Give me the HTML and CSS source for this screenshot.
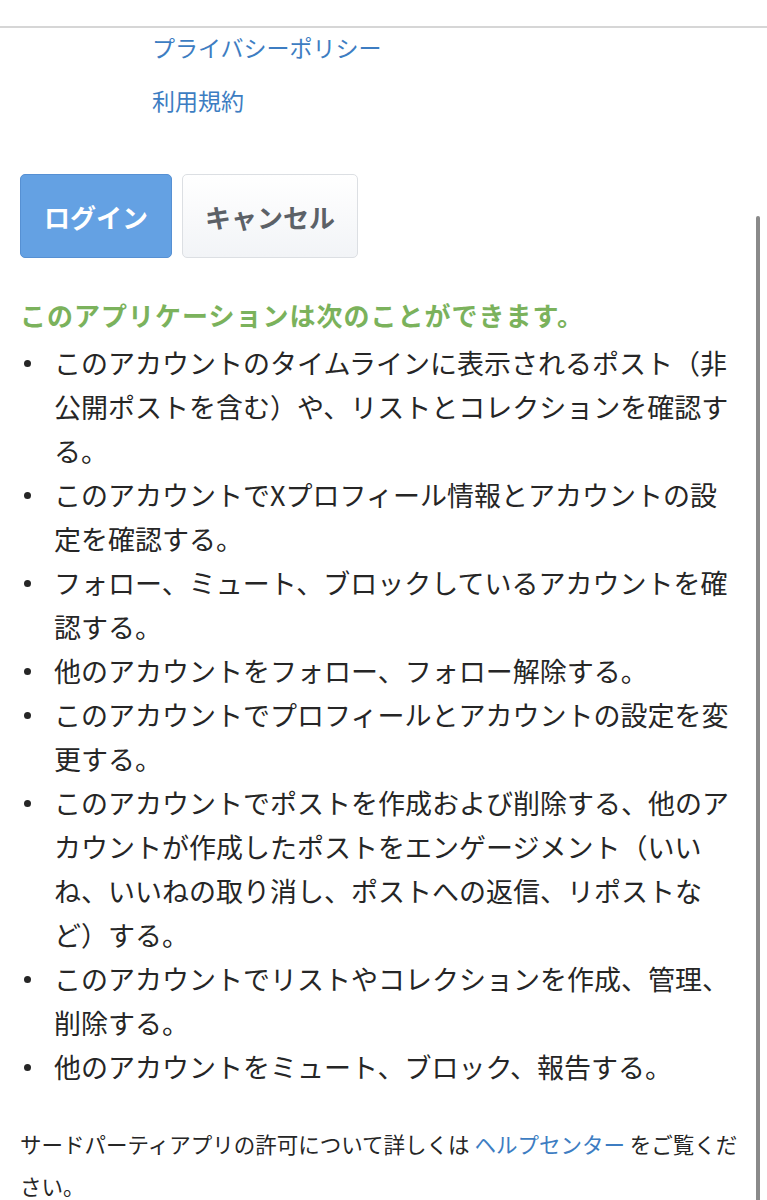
FILE: index.html
```html
<!DOCTYPE html>
<html lang="ja">
<head>
  <meta charset="UTF-8">
  <title>アプリ連携</title>
  <link rel="stylesheet" href="styles.css">
</head>
<body>
  <div class="topbar"></div>

  <ul class="links">
    <li><a href="#" class="link">プライバシーポリシー</a></li>
    <li><a href="#" class="link">利用規約</a></li>
  </ul>

  <div class="content">
    <div class="actions">
      <button class="btn primary">ログイン</button>
      <button class="btn">キャンセル</button>
    </div>

    <h2 class="perm-title">このアプリケーションは次のことができます。</h2>
    <ul class="perms">
      <li>このアカウントのタイムラインに表示されるポスト（非公開ポストを含む）や、リストとコレクションを確認する。</li>
      <li>このアカウントでXプロフィール情報とアカウントの設定を確認する。</li>
      <li>フォロー、ミュート、ブロックしているアカウントを確認する。</li>
      <li>他のアカウントをフォロー、フォロー解除する。</li>
      <li>このアカウントでプロフィールとアカウントの設定を変更する。</li>
      <li>このアカウントでポストを作成および削除する、他のアカウントが作成したポストをエンゲージメント（いいね、いいねの取り消し、ポストへの返信、リポストなど）する。</li>
      <li>このアカウントでリストやコレクションを作成、管理、削除する。</li>
      <li>他のアカウントをミュート、ブロック、報告する。</li>
    </ul>

    <p class="note">サードパーティアプリの許可について詳しくは <a href="#" class="link">ヘルプセンター</a> をご覧ください。</p>
  </div>

  <div class="scroll-thumb"></div>
</body>
</html>
```

FILE: styles.css
```css
html {
  overflow: hidden;
}

body {
  margin: 0;
  height: 1200px;
  overflow: hidden;
  position: relative;
  background: #fff;
  color: #262626;
  font-family: "Noto Sans CJK JP", "Noto Sans", sans-serif;
}

.topbar {
  height: 26px;
  border-bottom: 2px solid #d6d6d6;
}

.links {
  list-style: none;
  margin: 0;
  padding: 0 0 0 152px;
}

.links li {
  font-size: 23px;
  line-height: 38px;
  margin-bottom: 15px;
}

.link {
  color: #3d7dc2;
  text-decoration: none;
}

.content {
  padding: 0 27px 0 20px;
}

.actions {
  display: flex;
  gap: 10px;
  margin-top: 55px;
}

.btn {
  height: 84px;
  padding: 0 22px;
  font-family: inherit;
  font-size: 26px;
  font-weight: bold;
  color: #5c6167;
  background: linear-gradient(#ffffff, #f2f4f7);
  border: 1px solid #dcdfe3;
  border-radius: 5px;
}

.btn.primary {
  padding: 0 23px;
  color: #fff;
  background: #64a1e3;
  border-color: #5690d3;
}

.perm-title {
  margin: 39px 0 0;
  font-size: 26px;
  letter-spacing: 1px;
  line-height: 36px;
  color: #7bb25c;
}

.perms {
  list-style: none;
  margin: 8px 0 0;
  padding: 0;
}

.perms li {
  display: grid;
  grid-template-columns: 34px 1fr;
  font-size: 27px;
  line-height: 44px;
}

.perms li::before {
  content: "";
  width: 7px;
  height: 7px;
  margin: 19px 0 0 4px;
  border-radius: 50%;
  background: #262626;
}

.note {
  margin: 34px 0 0;
  font-size: 21.5px;
  line-height: 42px;
}

.scroll-thumb {
  position: absolute;
  top: 216px;
  right: 7px;
  width: 4px;
  height: 1000px;
  border-radius: 2px;
  background: #8a8a8a;
}
```
